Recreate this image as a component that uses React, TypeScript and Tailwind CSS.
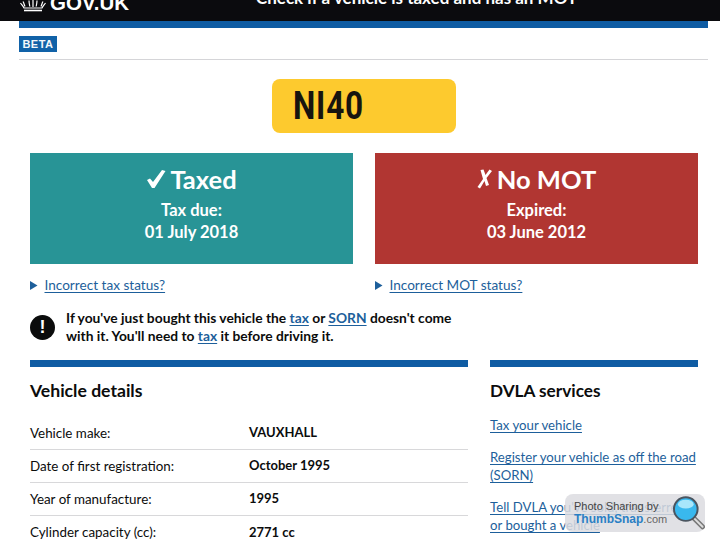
import React from 'react';

const sans = "font-['Lato','Open_Sans',sans-serif]";

const rows = [
  ['Vehicle make:', 'VAUXHALL'],
  ['Date of first registration:', 'October 1995'],
  ['Year of manufacture:', '1995'],
  ['Cylinder capacity (cc):', '2771 cc'],
];

const Crown: React.FC = () => (
  <svg width="26" height="12" viewBox="0 0 26 12" fill="none" stroke="#fff" strokeWidth="1.2">
    <path d="M3 1.5c1 1.5 1 3 2 5M9 0.5c0 2 .4 4 .8 6M17 0.5c0 2-.4 4-.8 6M23 1.5c-1 1.5-1 3-2 5" />
    <path d="M13 0v7" />
    <path d="M0.5 3c1.5 2 3 3.5 3.5 5h18c.5-1.5 2-3 3.5-5" />
    <path d="M4 10.5h18" strokeWidth="1.6" />
  </svg>
);

const Arrow: React.FC = () => (
  <svg width="8" height="9" viewBox="0 0 8 9" className="shrink-0">
    <path d="M0 0l7.5 4.5L0 9z" fill="#1d5f9b" />
  </svg>
);

const Status: React.FC<{ bg: string; mark: React.ReactNode; title: string; label: string; date: string }> = ({ bg, mark, title, label, date }) => (
  <div className={`flex h-[111px] flex-col items-center text-white ${bg}`}>
    <div className="mt-[8px] flex h-[36px] items-center gap-[4px] text-[25.5px] font-bold leading-[36px]">
      {mark}
      <span>{title}</span>
    </div>
    <div className="mt-[2px] text-[16.5px] font-bold leading-[22px]">{label}</div>
    <div className="text-[16.5px] font-bold leading-[22px]">{date}</div>
  </div>
);

const A: React.FC<{ children: React.ReactNode }> = ({ children }) => (
  <a className="text-[#1d5f9b] underline underline-offset-2">{children}</a>
);

export default function App() {
  return (
    <div className={`relative h-[544px] w-[720px] overflow-hidden bg-white text-[#0b0c0c] ${sans}`}>
      <header className="flex h-[21px] items-end overflow-hidden bg-[#0b0b0e] text-white">
        <div className="flex w-[256px] shrink-0 items-end gap-[4px] pb-[10px] pl-[20px]">
          <span className="mb-[-1px]"><Crown /></span>
          <span className="font-['Liberation_Sans',sans-serif] text-[20.5px] font-bold leading-[16px]">GOV.UK</span>
        </div>
        <div className="whitespace-nowrap pb-[15px] text-[17px] font-bold leading-[16px]">
          Check if a vehicle is taxed and has an MOT
        </div>
      </header>

      <div className="mx-[19px] w-[689px]">
        <div className="h-[7px] bg-[#0f5ca3]" />
        <div className="h-[32px] border-b border-[#d5d5d8] pt-[8px]">
          <span className="flex h-[16px] w-[38px] items-center justify-center bg-[#1162a8] font-['Liberation_Sans',sans-serif] text-[11px] font-bold tracking-[0.5px] text-[#f4f8fb]">
            BETA
          </span>
        </div>
      </div>

      <div className="mt-[19px] ml-[272px] flex h-[54px] w-[184px] items-center rounded-[8px] bg-[#fdca2e] pl-[21px]">
        <span className="origin-left scale-x-[0.83] font-['Roboto',sans-serif] text-[38px] font-bold leading-none tracking-[1px] text-[#16140f]">NI40</span>
      </div>

      <main className="mx-[30px] mt-[20px] w-[668px]">
        <div className="grid grid-cols-[323px_323px] gap-x-[22px]">
          <div>
            <Status
              bg="bg-[#289496]"
              title="Taxed"
              label="Tax due:"
              date="01 July 2018"
              mark={
                <svg width="20" height="20" viewBox="0 0 20 20" fill="#fff"><path d="M1 11l3-1.500L7 13 16 1l3.500 1L8.500 19H6z" /></svg>
              }
            />
            <div className="mt-[12px] flex h-[18px] items-center gap-[6.5px] text-[13.6px] leading-[18px]">
              <Arrow />
              <A>Incorrect tax status?</A>
            </div>
          </div>
          <div>
            <Status
              bg="bg-[#b13632]"
              title="No MOT"
              label="Expired:"
              date="03 June 2012"
              mark={
                <svg width="16" height="20" viewBox="0 0 16 20" fill="#fff"><path d="M3.500 1L6.500.5 8.500 6l4-5.500L15 2 9.500 9l2.500 7-3 1-1.500-5L3 19.500 0.500 18 6 10z" /></svg>
              }
            />
            <div className="mt-[12px] flex h-[18px] items-center gap-[6.5px] text-[13.6px] leading-[18px]">
              <Arrow />
              <A>Incorrect MOT status?</A>
            </div>
          </div>
        </div>

        <div className="mt-[15px] flex h-[36px] items-center gap-[11px]">
          <div className="flex h-[25px] w-[25px] shrink-0 items-center justify-center rounded-full bg-[#0b0c0c] font-['Liberation_Sans',sans-serif] text-[18px] font-bold text-white">
            !
          </div>
          <p className="text-[13.8px] font-bold leading-[18px]">
            If you've just bought this vehicle the <A>tax</A> or <A>SORN</A> doesn't come
            <br />
            with it. You'll need to <A>tax</A> it before driving it.
          </p>
        </div>

        <div className="mt-[15px] grid grid-cols-[438px_208px] gap-x-[22px]">
          <section>
            <div className="h-[7px] bg-[#0f5ca3]" />
            <h2 className="mt-[12px] h-[24px] text-[17.6px] font-bold leading-[24px]">Vehicle details</h2>
            <dl className="mt-[14px]">
              {rows.map(([k, v]) => (
                <div key={k} className="flex h-[33px] items-center border-b border-[#d8d8da] text-[13.4px] last:border-b-0">
                  <dt className="w-[219px] shrink-0">{k}</dt>
                  <dd className="text-[13px] font-bold">{v}</dd>
                </div>
              ))}
            </dl>
          </section>
          <aside>
            <div className="h-[7px] bg-[#0f5ca3]" />
            <h2 className="mt-[12px] h-[24px] text-[17.2px] font-bold leading-[24px]">DVLA services</h2>
            <ul className="mt-[13px] flex flex-col gap-[14px] whitespace-nowrap text-[13.2px] leading-[18px]">
              <li><A>Tax your vehicle</A></li>
              <li><A>Register your vehicle as off the road<br />(SORN)</A></li>
              <li><A>Tell DVLA you've sold, transferred<br />or bought a vehicle</A></li>
            </ul>
          </aside>
        </div>
      </main>

      <div className="absolute left-[565px] top-[494px] flex h-[38px] w-[140px] items-center rounded-[8px] bg-[#dcdce0]/85">
        <div className="ml-[9px] flex w-[100px] flex-col font-['Liberation_Sans',sans-serif] leading-[13px]">
          <span className="text-[11px] text-[#444]">Photo Sharing by</span>
          <span className="text-[11px] text-[#666]">
            <span className="text-[12px] font-bold text-[#2a7fc4]">ThumbSnap</span>.com
          </span>
        </div>
        <svg width="34" height="36" viewBox="0 0 34 36" className="ml-[-1px]">
          <path d="M22 23l9 9" stroke="#777" strokeWidth="5" strokeLinecap="round" />
          <path d="M22 23l9 9" stroke="#ddd" strokeWidth="2" strokeLinecap="round" />
          <circle cx="14" cy="14" r="12" fill="#39b8ee" stroke="#4a5560" strokeWidth="2" />
          <ellipse cx="14" cy="9" rx="8" ry="4.500" fill="#a8e6fb" />
        </svg>
      </div>
    </div>
  );
}
